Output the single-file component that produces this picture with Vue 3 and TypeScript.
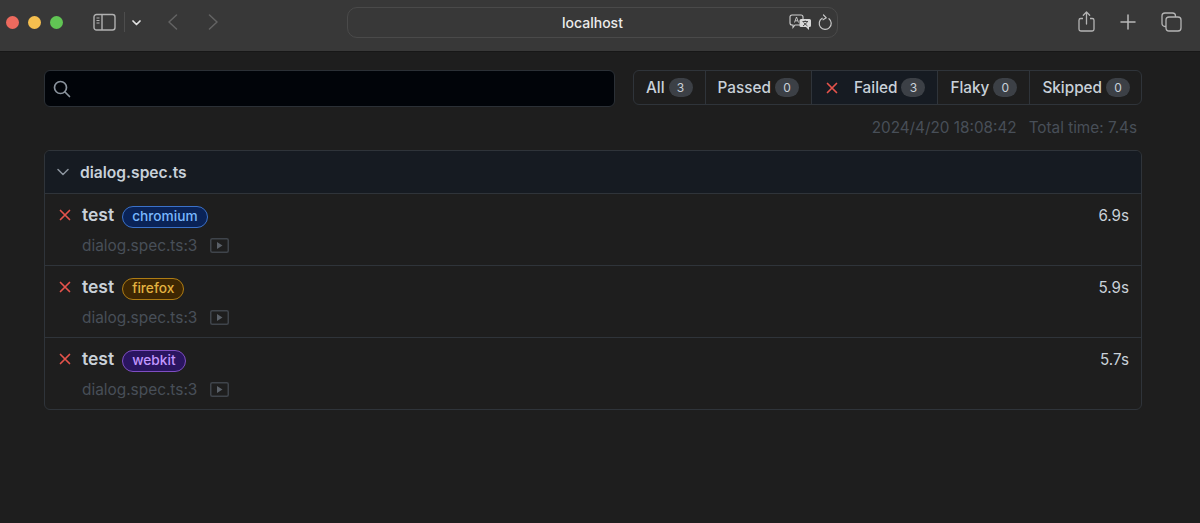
<script setup lang="ts">
interface Row { project: string; time: string }
const rows: Row[] = [
  { project: 'chromium', time: '6.9s' },
  { project: 'firefox', time: '5.9s' },
  { project: 'webkit', time: '5.7s' },
]
const filters = [
  { name: 'All', count: 3 },
  { name: 'Passed', count: 0 },
  { name: 'Failed', count: 3, active: true },
  { name: 'Flaky', count: 0 },
  { name: 'Skipped', count: 0 },
]
</script>

<template>
  <div class="page">
    <header class="bar">
      <div class="lights">
        <span class="light red"></span><span class="light yellow"></span><span class="light green"></span>
      </div>
      <svg class="sidebar-ic" width="23" height="18" viewBox="0 0 23 18" fill="none">
        <rect x="1" y="1.500" width="21" height="15.500" rx="2.500" stroke="#b0b0b0" stroke-width="1.400" />
        <path d="M9 1.500V17" stroke="#b0b0b0" stroke-width="1.400" />
        <path d="M3.500 5h3M3.500 7.500h3M3.500 10h3" stroke="#b0b0b0" stroke-width="1.100" />
      </svg>
      <span class="divider"></span>
      <svg class="chev" width="9" height="6" viewBox="0 0 9 6" fill="none">
        <path d="M1 1l3.500 3.500L8 1" stroke="#e2e2e2" stroke-width="1.700" stroke-linecap="round" stroke-linejoin="round" />
      </svg>
      <svg class="back" width="11" height="16" viewBox="0 0 11 16" fill="none">
        <path d="M9.500 1L2 8l7.500 7" stroke="#636363" stroke-width="1.500" stroke-linecap="round" stroke-linejoin="round" />
      </svg>
      <svg class="fwd" width="11" height="16" viewBox="0 0 11 16" fill="none">
        <path d="M1.500 1L9 8l-7.500 7" stroke="#636363" stroke-width="1.500" stroke-linecap="round" stroke-linejoin="round" />
      </svg>
      <div class="url">
        <span class="host">localhost</span>
        <svg class="translate" width="23" height="17" viewBox="0 0 23 17" fill="none">
          <path d="M3 1h9a2 2 0 0 1 2 2v6a2 2 0 0 1-2 2H6l-2 2.500V11H3a2 2 0 0 1-2-2V3a2 2 0 0 1 2-2z" fill="#383838" stroke="#cfcfcf" stroke-width="1.100" />
          <path d="M5.500 8.500L7.500 3l2 5.500M6.200 6.800h2.600" stroke="#cfcfcf" stroke-width="0.900" />
          <path d="M12 5h8.500a1.500 1.500 0 0 1 1.500 1.500v5a1.500 1.500 0 0 1-1.500 1.500H20v3l-3-3h-5a1.500 1.500 0 0 1-1.500-1.500v-5A1.500 1.500 0 0 1 12 5z" fill="#d8d8d8" />
          <path d="M13.500 7.500h5.500M16.200 6.500v1M14 12l4.500-4M14.500 8.500l4 3.500" stroke="#383838" stroke-width="0.900" />
        </svg>
        <svg class="reload" width="14" height="17" viewBox="0 0 14 17" fill="none">
          <path d="M4.200 4.200A6 6 0 1 0 11 4.700" stroke="#c8c8c8" stroke-width="1.200" stroke-linecap="round" />
          <path d="M5.500 1l2.800 2.800-3.300 2" stroke="#c8c8c8" stroke-width="1.200" stroke-linecap="round" stroke-linejoin="round" />
        </svg>
      </div>
      <svg class="share" width="17" height="21" viewBox="0 0 17 21" fill="none">
        <path d="M5 7.500H2.800A1.800 1.800 0 0 0 1 9.300v8.900A1.800 1.800 0 0 0 2.800 20h11.400a1.800 1.800 0 0 0 1.800-1.800V9.300a1.800 1.800 0 0 0-1.800-1.800H12" stroke="#b4b4b4" stroke-width="1.300" />
        <path d="M8.500 13V1.200M5.300 4.200L8.500 1l3.200 3.200" stroke="#b4b4b4" stroke-width="1.300" stroke-linecap="round" stroke-linejoin="round" />
      </svg>
      <svg class="plus" width="16" height="16" viewBox="0 0 16 16" fill="none">
        <path d="M8 1v14M1 8h14" stroke="#b8b8b8" stroke-width="1.500" stroke-linecap="round" />
      </svg>
      <svg class="tabs" width="21" height="20" viewBox="0 0 21 20" fill="none">
        <path d="M5 14.500H4a3 3 0 0 1-3-3V4a3 3 0 0 1 3-3h7.500a3 3 0 0 1 3 3v1" stroke="#b4b4b4" stroke-width="1.300" />
        <rect x="5" y="5" width="15" height="14" rx="3" stroke="#b4b4b4" stroke-width="1.300" />
      </svg>
    </header>

    <main class="content">
      <div class="top">
        <div class="search">
          <svg width="18" height="18" viewBox="0 0 18 18" fill="none">
            <circle cx="7.500" cy="7.500" r="6" stroke="#8b949e" stroke-width="1.700" />
            <path d="M12 12l4.500 4.500" stroke="#8b949e" stroke-width="1.700" stroke-linecap="round" />
          </svg>
        </div>
        <nav class="filters">
          <a v-for="f in filters" :key="f.name" class="filter" :class="{ active: f.active }">
            <svg v-if="f.active" class="x filter-x" width="12" height="12" viewBox="0 0 12 12" fill="none">
              <path d="M1.500 1.500l9 9M10.500 1.500l-9 9" stroke="#e5534b" stroke-width="1.700" stroke-linecap="round" />
            </svg>
            <span>{{ f.name }}</span>
            <span class="count">{{ f.count }}</span>
          </a>
        </nav>
      </div>
      <div class="meta">
        <span>2024/4/20 18:08:42</span>
        <span>Total time: 7.4s</span>
      </div>

      <section class="card">
        <div class="card-head">
          <svg width="12" height="8" viewBox="0 0 12 8" fill="none">
            <path d="M1 1.500l5 5 5-5" stroke="#8b949e" stroke-width="1.500" stroke-linecap="round" stroke-linejoin="round" />
          </svg>
          <span>dialog.spec.ts</span>
        </div>
        <div v-for="r in rows" :key="r.project" class="row">
          <div class="row-main">
            <div class="row-title">
              <svg class="x" width="12" height="12" viewBox="0 0 12 12" fill="none">
                <path d="M1.500 1.500l9 9M10.500 1.500l-9 9" stroke="#e5534b" stroke-width="1.700" stroke-linecap="round" />
              </svg>
              <span class="name">test</span>
              <span class="tag" :class="r.project">{{ r.project }}</span>
            </div>
            <div class="row-sub">
              <span>dialog.spec.ts:3</span>
              <svg width="19" height="15" viewBox="0 0 19 15" fill="none">
                <rect x="0.750" y="0.750" width="17.500" height="13.500" rx="1.500" stroke="#3f444b" stroke-width="1.500" />
                <path d="M7 4l5.500 3.500L7 11z" fill="#5a6068" />
              </svg>
            </div>
          </div>
          <span class="time">{{ r.time }}</span>
        </div>
      </section>
    </main>
  </div>
</template>

<style>
html, body { margin: 0; background: #1e1e1e; }
</style>

<style scoped>
.page {
  width: 1200px;
  height: 523px;
  overflow: hidden;
  background: #1e1e1e;
  font-family: Inter, "Liberation Sans", sans-serif;
  color: #c9d1d9;
}
.bar {
  height: 44px;
  padding-bottom: 7px;
  border-bottom: 1px solid #171717;
  background: #383838;
  display: flex;
  align-items: center;
}
.lights { display: flex; gap: 9px; margin-left: 6px; }
.light { width: 13px; height: 13px; border-radius: 50%; }
.red { background: #ed6a5e; }
.yellow { background: #f5bf4f; }
.green { background: #61c554; }
.sidebar-ic { margin-left: 30px; }
.divider { width: 1px; height: 20px; background: #4d4d4d; margin-left: 8px; }
.chev { margin-left: 7px; margin-top: 1px; }
.back { margin-left: 26px; }
.fwd { margin-left: 30px; }
.url {
  width: 489px;
  height: 29px;
  margin-left: 128px;
  border: 1px solid #4a4a4a;
  border-radius: 10px;
  display: flex;
  align-items: center;
  position: relative;
}
.host {
  position: absolute;
  left: 0;
  right: 0;
  text-align: center;
  font-size: 14px;
  font-weight: 500;
  color: #ececec;
}
.translate { position: absolute; left: 441px; top: 6px; }
.reload { position: absolute; left: 470px; top: 6px; }
.share { margin-left: 240px; margin-top: -1px; }
.plus { margin-left: 25px; }
.tabs { margin-left: 25px; }
.content { padding: 18px 58px 0 44px; }
.top { display: flex; align-items: flex-start; gap: 18px; }
.search {
  box-sizing: border-box;
  width: 571px;
  height: 37px;
  background: #010409;
  border: 1px solid #2b3036;
  border-radius: 6px;
  display: flex;
  align-items: center;
  padding-left: 8px;
}
.filters {
  flex: 1;
  height: 35px;
  box-sizing: border-box;
  display: flex;
  border: 1px solid #2f343a;
  border-radius: 6px;
  overflow: hidden;
}
.filter {
  display: flex;
  align-items: center;
  box-sizing: border-box;
  padding: 0 12px;
  font-size: 15.300px;
  font-weight: 500;
  color: #c9d1d9;
  border-left: 1px solid #2f343a;
  white-space: nowrap;
}
.filter:first-child { border-left: 0; padding-right: 12px; }
.filter.active { background: #161b22; }
.filter-x { margin-right: 16px; margin-left: 2px; }
.count {
  display: inline-block;
  min-width: 24px;
  height: 19px;
  line-height: 19px;
  margin-left: 4px;
  border-radius: 10px;
  background: #3c4046;
  text-align: center;
  font-size: 12px;
  font-weight: 400;
}
.meta {
  display: flex;
  justify-content: flex-end;
  gap: 12px;
  padding: 0 5px 0 0;
  height: 43px;
  line-height: 42px;
  font-size: 15.300px;
  color: #484f58;
}
.card {
  box-sizing: border-box;
  height: 260px;
  border: 1px solid #2f343a;
  border-radius: 6px;
  overflow: hidden;
}
.card-head {
  height: 42px;
  background: #161b22;
  display: flex;
  align-items: center;
  gap: 11px;
  padding-left: 12px;
  font-size: 15.600px;
  font-weight: 600;
  color: #c9d1d9;
}
.row {
  box-sizing: border-box;
  height: 72px;
  border-top: 1px solid #2f343a;
  display: flex;
  justify-content: space-between;
  padding: 10px 12px 0 14px;
}
.row-title { display: flex; align-items: center; height: 22px; }
.name { margin-left: 11px; font-size: 17.500px; font-weight: 600; color: #c9d1d9; margin-top: -1px; }
.tag {
  box-sizing: border-box;
  height: 22px;
  line-height: 19px;
  margin-left: 8px;
  margin-top: 3px;
  padding: 0 9px;
  border-radius: 11px;
  border: 1.500px solid;
  font-size: 13.700px;
  font-weight: 500;
}
.chromium { background: #0a2357; border-color: #3b71c9; color: #79b8ff; }
.firefox { background: #3e2703; border-color: #ae7c14; color: #e3b341; }
.webkit { background: #2a1560; border-color: #7e4ec2; color: #c297ff; }
.row-sub {
  margin: 8px 0 0 23px;
  display: flex;
  align-items: center;
  gap: 13px;
  font-size: 15.400px;
  color: #484f58;
  height: 22px;
}
.time { font-size: 15.200px; color: #c9d1d9; line-height: 24px; }
</style>
